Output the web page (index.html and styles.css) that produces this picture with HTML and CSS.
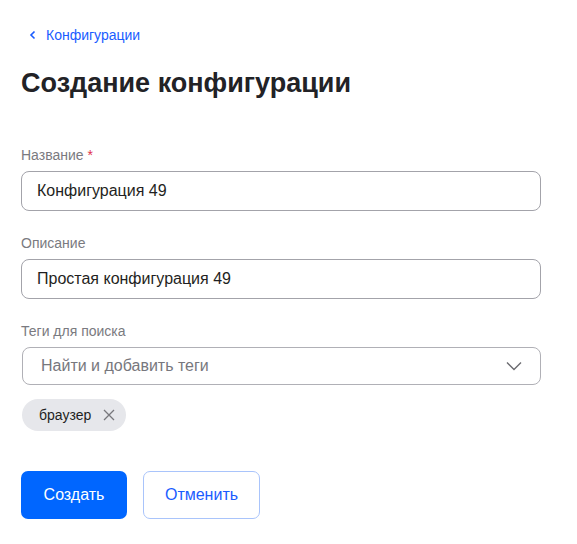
FILE: index.html
```html
<!DOCTYPE html>
<html lang="ru">
<head>
<meta charset="utf-8">
<title>Создание конфигурации</title>
<link rel="stylesheet" href="styles.css">
</head>
<body>
<div class="page">
  <a class="crumb" href="#">
    <svg class="crumb-icon" width="8" height="10" viewBox="0 0 8 10"><path d="M5.5 1.5 L2 5 L5.5 8.5" fill="none" stroke="currentColor" stroke-width="1.6"/></svg>
    <span>Конфигурации</span>
  </a>
  <h1 class="title">Создание конфигурации</h1>

  <form class="form">
    <div class="field">
      <label class="label">Название <span class="req">*</span></label>
      <div class="input">Конфигурация 49</div>
    </div>
    <div class="field">
      <label class="label">Описание</label>
      <div class="input">Простая конфигурация 49</div>
    </div>
    <div class="field">
      <label class="label">Теги для поиска</label>
      <div class="select">
        <span class="placeholder">Найти и добавить теги</span>
        <svg class="select-arrow" width="16" height="10" viewBox="0 0 16 10"><path d="M1 1.5 L8 8.5 L15 1.5" fill="none" stroke="#6b6b70" stroke-width="1.4"/></svg>
      </div>
    </div>
    <div class="chips">
      <span class="chip">браузер
        <svg class="chip-x" width="12" height="12" viewBox="0 0 12 12"><path d="M1 1 L11 11 M11 1 L1 11" fill="none" stroke="#77777c" stroke-width="1.3"/></svg>
      </span>
    </div>
    <div class="actions">
      <button type="button" class="btn btn-primary">Создать</button>
      <button type="button" class="btn btn-secondary">Отменить</button>
    </div>
  </form>
</div>
</body>
</html>
```

FILE: styles.css
```css
* { box-sizing: border-box; }
body {
  margin: 0;
  background: #fff;
  font-family: "Liberation Sans", Arial, sans-serif;
  color: #1f1f22;
}
.page {
  padding: 25px 36px 0 21px;
}
.crumb {
  display: flex;
  align-items: center;
  gap: 9px;
  padding-left: 8px;
  color: #1a5cff;
  text-decoration: none;
  font-size: 14px;
  line-height: 20px;
}
.crumb-icon { display: block; }
.title {
  margin: 22px 0 0;
  font-size: 27px;
  line-height: 32px;
  font-weight: 700;
  color: #222226;
}
.form {
  margin-top: 46px;
  display: flex;
  flex-direction: column;
}
.field {
  display: flex;
  flex-direction: column;
  margin-bottom: 22px;
}
.label {
  font-size: 14px;
  line-height: 20px;
  color: #7a7a80;
  margin-bottom: 6px;
}
.req { color: #e0304e; }
.input {
  height: 40px;
  border: 1px solid #a3a3aa;
  border-radius: 8px;
  padding: 0 15px;
  display: flex;
  align-items: center;
  font-size: 16px;
  color: #1f1f22;
}
.select {
  height: 38px;
  margin-left: 1px;
  border: 1px solid #b0b0b6;
  border-radius: 8px;
  padding: 0 18px 0 18px;
  display: flex;
  align-items: center;
  justify-content: space-between;
  font-size: 16px;
}
.placeholder { color: #77777d; }
.field:nth-child(3) { margin-bottom: 14px; }
.chips { display: flex; padding-left: 1px; }
.chip {
  display: inline-flex;
  align-items: center;
  gap: 12px;
  height: 32px;
  padding: 0 11px 0 17px;
  border-radius: 16px;
  background: #e6e7eb;
  font-size: 14px;
  color: #1f1f22;
}
.chip-x { display: block; }
.actions {
  display: flex;
  gap: 16px;
  margin-top: 40px;
}
.btn {
  height: 48px;
  border-radius: 7px;
  font-family: "Liberation Sans", Arial, sans-serif;
  font-size: 16px;
  cursor: pointer;
}
.btn-primary {
  width: 106px;
  background: #0066ff;
  border: none;
  color: #fff;
}
.btn-secondary {
  width: 117px;
  background: #fff;
  border: 1px solid #a9c4fb;
  color: #1a5cff;
}
```
